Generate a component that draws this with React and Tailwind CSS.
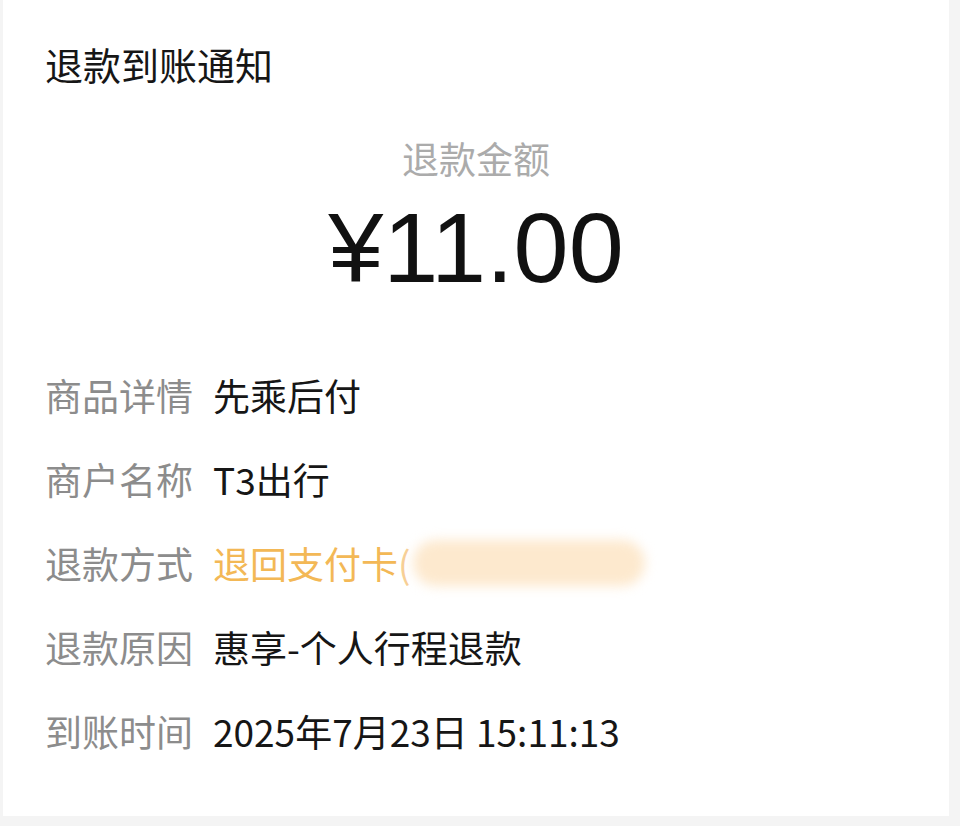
import React from "react";

const cjk = { fontFamily: '"Noto Sans CJK SC", "Noto Sans", sans-serif' };

const rows = [
  { label: "商品详情", value: "先乘后付" },
  { label: "商户名称", value: "T3出行" },
  { label: "退款方式", value: "退回支付卡", masked: true },
  { label: "退款原因", value: "惠享-个人行程退款" },
  { label: "到账时间", value: "2025年7月23日 15:11:13" },
];

function Row({ label, value, masked }) {
  return (
    <div className="flex items-center h-[48px] text-[37px] leading-[48px]">
      <span className="w-[168px] shrink-0 text-[#8c8c8c]">{label}</span>
      {masked ? (
        <span className="flex items-center text-[#f3b856]">
          {value}
          <span className="text-[#f7cf95]">(</span>
          <span className="ml-[2px] inline-block h-[46px] w-[232px] rounded-full bg-[#fde9ce] blur-[6px]" />
        </span>
      ) : (
        <span className="text-[#161616]">{value}</span>
      )}
    </div>
  );
}

export default function App() {
  return (
    <div className="min-h-screen w-full bg-[#f4f4f4]" style={cjk}>
      <div className="ml-[3px] h-[816px] w-[946px] bg-white px-[42px]">
        <div className="pt-[40px] text-[38px] leading-[48px] text-[#161616]">退款到账通知</div>
        <div className="mt-[46px] text-center text-[37px] leading-[48px] text-[#ababab]">退款金额</div>
        <div
          className="mt-[13px] text-center text-[99px] leading-[106px] text-[#111]"
          style={{ fontFamily: '"Liberation Sans", Arial, sans-serif' }}
        >
          ¥11.00
        </div>
        <div className="mt-[70px] flex flex-col gap-[36px]">
          {rows.map((r) => (
            <Row key={r.label} {...r} />
          ))}
        </div>
      </div>
    </div>
  );
}
